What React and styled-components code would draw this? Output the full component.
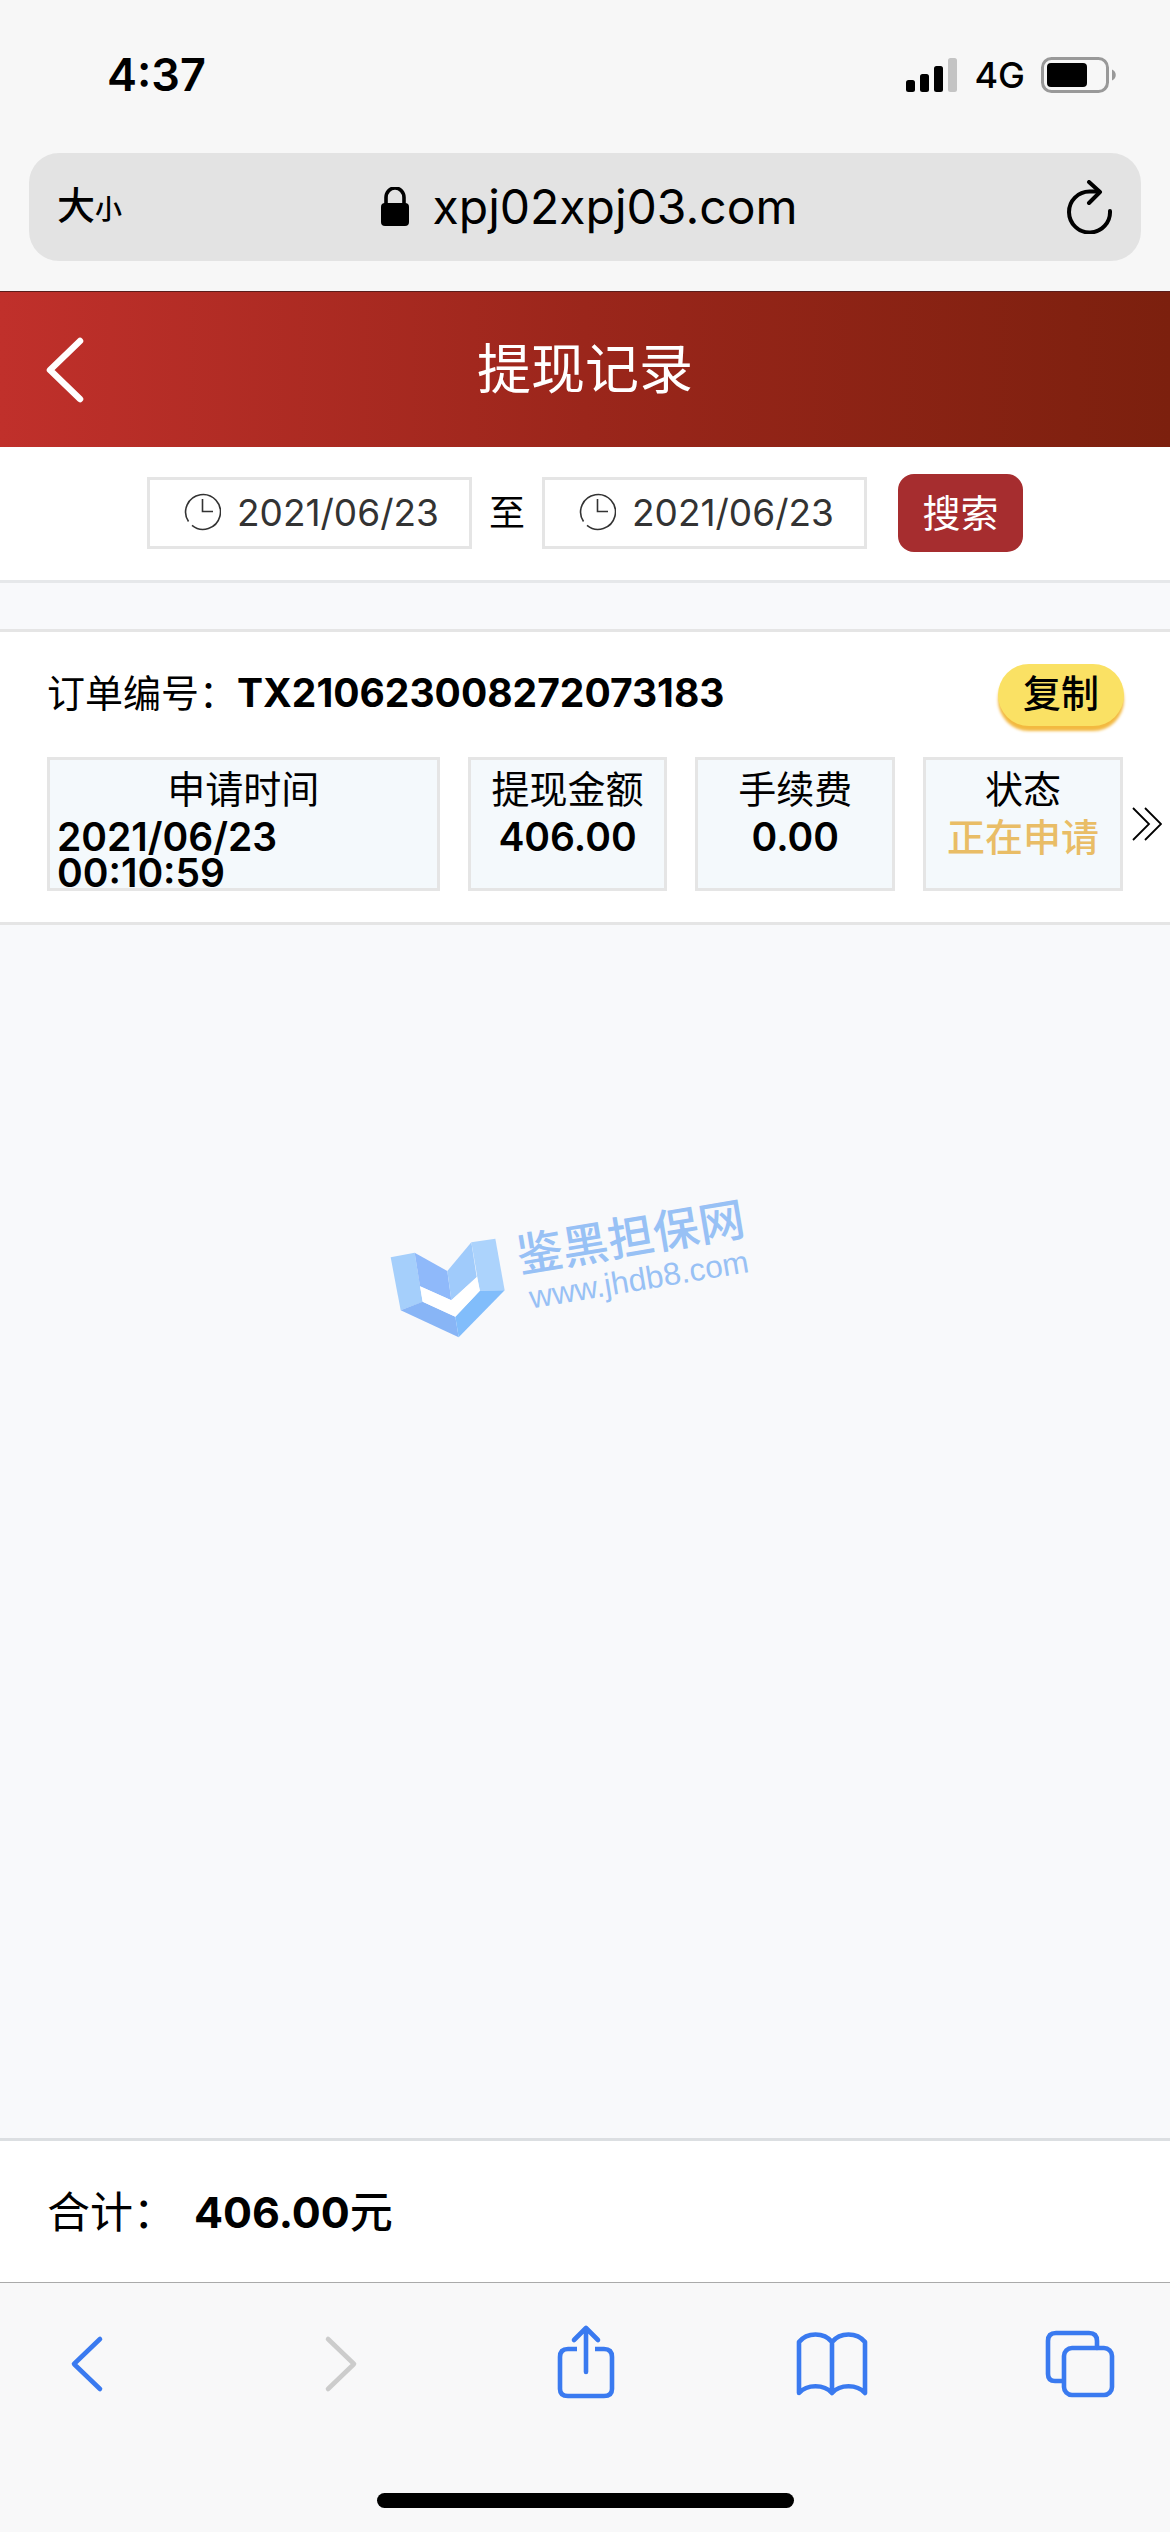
import React, { useState } from "react";
import styled, { createGlobalStyle } from "styled-components";

const GlobalStyle = createGlobalStyle`
  * {
    box-sizing: border-box;
  }

  body {
    margin: 0;
    color: #000;
    background: #f8f9fb;
    font-family: Inter, "Noto Sans CJK SC", sans-serif;
    font-size: 38px;
    line-height: 48px;
  }

  button, input {
    margin: 0;
    padding: 0;
    border: 0;
    background: none;
    color: inherit;
    font: inherit;
  }

  svg {
    display: block;
    flex: none;
  }
`;

const Page = styled.div`
  position: relative;
  display: flex;
  flex-direction: column;
  min-height: 100vh;
`;

const BrowserTop = styled.div`
  height: 292px;
  padding: 0 29px;
  background: #f7f7f7;
  border-bottom: 1px solid #5a1d1b;
`;

const StatusBar = styled.div`
  display: flex;
  align-items: center;
  justify-content: space-between;
  height: 153px;
  padding: 0 24px 4px 78px;
`;

const Clock = styled.time`
  font-size: 45px;
  font-weight: 600;
`;

const StatusIcons = styled.div`
  display: flex;
  align-items: center;
  gap: 16px;
  font-size: 36px;
  font-weight: 500;
`;

const AddressBar = styled.div`
  display: flex;
  align-items: center;
  justify-content: space-between;
  height: 108px;
  padding: 0 28px;
  border-radius: 30px;
  background: #e3e3e3;
`;

const TextSize = styled.button`
  display: flex;
  align-items: baseline;
  width: 80px;
  font-size: 38px;
  font-weight: 500;

  small {
    font-size: 27px;
  }
`;

const Address = styled.div`
  display: flex;
  align-items: center;
  gap: 24px;
  font-size: 48px;
`;

const Reload = styled.button`
  display: flex;
  justify-content: flex-end;
  width: 72px;
`;

const Header = styled.header`
  display: grid;
  grid-template-columns: 120px 1fr 120px;
  align-items: center;
  height: 155px;
  color: #fff;
  background: linear-gradient(to right, #c0302b, #9b261b 50%, #7c200e);

  h1 {
    margin: 0;
    font-size: 54px;
    font-weight: 400;
    line-height: 64px;
    text-align: center;
  }
`;

const BackLink = styled.a`
  padding-left: 45px;
  color: inherit;
`;

const Filter = styled.form`
  display: flex;
  align-items: center;
  justify-content: center;
  height: 136px;
  padding-bottom: 2px;
  background: #fff;
  border-bottom: 3px solid #e6e8ea;
`;

const DateBox = styled.label`
  display: flex;
  align-items: center;
  gap: 16px;
  width: 325px;
  height: 72px;
  padding-left: 34px;
  border: 3px solid #e5e5e5;
  color: #333;
  font-size: 37px;

  input {
    flex: 1;
    min-width: 0;
  }
`;

const Until = styled.span`
  width: 70px;
  font-size: 36px;
  text-align: center;
`;

const SearchButton = styled.button`
  width: 125px;
  height: 78px;
  margin-left: 31px;
  border-radius: 16px;
  color: #fff;
  background: #a62d2f;
`;

const Records = styled.main`
  flex: 1;
  padding-top: 46px;
`;

const Record = styled.article`
  padding: 32px 0 31px 47px;
  background: #fff;
  border: solid #e5e5e5;
  border-width: 3px 0;
`;

const RecordHead = styled.div`
  display: flex;
  align-items: center;
  justify-content: space-between;
  padding-right: 46px;
  margin-bottom: 31px;

  p {
    margin: 0 0 4px;
  }

  b {
    font-size: 39px;
    font-weight: 700;
  }
`;

const CopyButton = styled.button`
  width: 126px;
  height: 62px;
  padding-bottom: 4px;
  border-radius: 31px;
  background: #fae164;
  box-shadow: 0 5px 3px #f3b940;
  font-weight: 500;
`;

const RecordBody = styled.div`
  display: flex;
`;

const Cells = styled.dl`
  display: grid;
  flex: 1;
  grid-template-columns: 393fr 200fr 200fr 200fr;
  gap: 28px;
  margin: 0;
`;

const Cell = styled.div`
  display: flex;
  flex-direction: column;
  align-items: center;
  height: 134px;
  padding: 5px 7px 0;
  border: 3px solid #e5e5e5;
  background: #f4f9fc;

  dt {
    white-space: nowrap;
  }

  dd {
    margin: 6px 0 0;
    color: ${({ $pending }) => ($pending ? "#e9bd66" : "inherit")};
    font-size: ${({ $pending }) => ($pending ? "38px" : "39px")};
    font-weight: ${({ $pending }) => ($pending ? 500 : 600)};
    line-height: 36px;
  }
`;

const MoreButton = styled.button`
  display: flex;
  align-items: center;
  justify-content: center;
  width: 47px;
`;

const Total = styled.footer`
  display: flex;
  align-items: center;
  gap: 18px;
  height: 144px;
  padding-left: 47px;
  background: #fff;
  border-top: 3px solid #dcdfe2;
  font-size: 43px;
`;

const Amount = styled.strong`
  font-weight: 700;

  span {
    font-weight: 500;
  }
`;

const Toolbar = styled.nav`
  display: flex;
  justify-content: space-between;
  padding: 39px 50px 0 47px;
  background: #f8f8f9;
  border-top: 1px solid #aaa;

  button {
    color: #3a7af0;
  }

  button:disabled {
    color: #ccc;
  }
`;

const HomeIndicator = styled.div`
  display: flex;
  justify-content: center;
  padding: 91px 0 24px;
  background: #f8f8f9;

  &::after {
    content: "";
    width: 417px;
    height: 15px;
    border-radius: 8px;
    background: #000;
  }
`;

const Watermark = styled.svg`
  position: absolute;
  top: 50%;
  left: 50%;
  transform: translate(-50%, -50%);
  pointer-events: none;
`;

const ClockIcon = () => (
  <svg width="37" height="42" viewBox="0 0 37 42" fill="none" stroke="#333" strokeWidth="1.6">
    <path d="M4.5 29.5A17.4 17.4 0 1 1 8 33.4" />
    <path d="M18.5 7v12.5H29" />
  </svg>
);

const ToolIcon = ({ children }) => (
  <svg width="80" height="80" viewBox="0 0 80 80" fill="none" stroke="currentColor" strokeWidth="4.6" strokeLinecap="round" strokeLinejoin="round">
    {children}
  </svg>
);

const DateField = ({ label, value, onChange }) => (
  <DateBox>
    <ClockIcon />
    <input type="text" aria-label={label} value={value} onChange={(e) => onChange(e.target.value)} />
  </DateBox>
);

const cells = [
  { label: "申请时间", value: "2021/06/23 00:10:59" },
  { label: "提现金额", value: "406.00" },
  { label: "手续费", value: "0.00" },
  { label: "状态", value: "正在申请", pending: true },
];

const App = () => {
  const [from, setFrom] = useState("2021/06/23");
  const [to, setTo] = useState("2021/06/23");

  return (
    <Page>
      <GlobalStyle />
      <BrowserTop>
        <StatusBar>
          <Clock>4:37</Clock>
          <StatusIcons>
            <svg width="52" height="36" viewBox="0 0 52 36">
              <rect x="0" y="23" width="9" height="12" rx="2.5" />
              <rect x="14" y="17" width="9" height="18" rx="2.5" />
              <rect x="28" y="9" width="9" height="26" rx="2.5" />
              <rect x="42" y="1" width="9" height="34" rx="2.5" fill="#c4c4c4" />
            </svg>
            4G
            <svg width="76" height="36" viewBox="0 0 76 36">
              <rect x="1.5" y="1.5" width="65" height="33" rx="9" fill="none" stroke="#999" strokeWidth="3" />
              <rect x="6" y="6" width="40" height="24" rx="4" />
              <path d="M71 12.5c5 2 5 9 0 11z" fill="#999" />
            </svg>
          </StatusIcons>
        </StatusBar>
        <AddressBar>
          <TextSize aria-label="大小">大<small>小</small></TextSize>
          <Address>
            <svg width="28" height="40" viewBox="0 0 28 40">
              <rect x="0" y="16" width="28" height="23" rx="4" />
              <path d="M5 18v-7.500a9 9.500 0 0 1 18 0V18" fill="none" stroke="#000" strokeWidth="3.600" />
            </svg>
            xpj02xpj03.com
          </Address>
          <Reload aria-label="刷新">
            <svg width="46" height="54" viewBox="0 0 46 54" fill="none" stroke="#000" strokeWidth="4" strokeLinecap="round" strokeLinejoin="round">
              <path d="M43 31A20.500 20.500 0 1 1 22.500 11.500H32" />
              <path d="M22 2l11 10-11 11" />
            </svg>
          </Reload>
        </AddressBar>
      </BrowserTop>

      <Header>
        <BackLink href="#back" aria-label="返回">
          <svg width="40" height="68" viewBox="0 0 40 68" fill="none" stroke="currentColor" strokeWidth="6.500" strokeLinecap="round" strokeLinejoin="round">
            <path d="M35 5L5 34l30 29" />
          </svg>
        </BackLink>
        <h1>提现记录</h1>
      </Header>

      <Filter onSubmit={(e) => e.preventDefault()}>
        <DateField label="开始日期" value={from} onChange={setFrom} />
        <Until>至</Until>
        <DateField label="结束日期" value={to} onChange={setTo} />
        <SearchButton type="submit">搜索</SearchButton>
      </Filter>

      <Records>
        <Record>
          <RecordHead>
            <p>订单编号：<b>TX210623008272073183</b></p>
            <CopyButton type="button">复制</CopyButton>
          </RecordHead>
          <RecordBody>
            <Cells>
              {cells.map(({ label, value, pending }) => (
                <Cell key={label} $pending={pending}>
                  <dt>{label}</dt>
                  <dd>{value}</dd>
                </Cell>
              ))}
            </Cells>
            <MoreButton type="button" aria-label="详情">
              <svg width="30" height="34" viewBox="0 0 30 34" fill="none" stroke="#000" strokeWidth="1.800">
                <path d="M1 1l16 16L1 33M13 1l16 16-16 16" />
              </svg>
            </MoreButton>
          </RecordBody>
        </Record>
      </Records>

      <Total>
        <span>合计：</span>
        <Amount>406.00<span>元</span></Amount>
      </Total>

      <Toolbar>
        <button aria-label="后退">
          <ToolIcon><path d="M53 17L27 42l26 25" /></ToolIcon>
        </button>
        <button aria-label="前进" disabled>
          <ToolIcon><path d="M33 17l26 25-26 25" /></ToolIcon>
        </button>
        <button aria-label="分享">
          <ToolIcon>
            <path d="M33 27h-9q-8 0-8 8v32q0 7 8 7h36q8 0 8-7V35q0-8-8-8h-9" strokeLinecap="butt" />
            <path d="M42 50V6M30 18L42 6l12 12" />
          </ToolIcon>
        </button>
        <button aria-label="书签">
          <ToolIcon>
            <path d="M40 20C32 10 15 10 7 20v51c8-9 25-9 33 0 8-9 25-9 33 0V20C65 10 48 10 40 20zv51" />
          </ToolIcon>
        </button>
        <button aria-label="标签页">
          <ToolIcon>
            <path d="M22 59h-7q-7 0-7-7V19q0-8 8-8h33q8 0 8 8v7" />
            <rect x="24" y="26" width="48" height="47" rx="8" />
          </ToolIcon>
        </button>
      </Toolbar>
      <HomeIndicator />

      <Watermark width="400" height="180" viewBox="45 -12 1200 540">
        <path d="M62 232l72-14 24 148-66 25z" fill="#a5cffb" />
        <path d="M134 218l98 55 12 88-94-42z" fill="#8fb9fa" />
        <path d="M232 273l72-86 16 104-76 70z" fill="#a0cbfb" />
        <path d="M304 187l72-11 28 155-75 1z" fill="#acd3fc" />
        <path d="M92 391l66-26 98 45 10 62z" fill="#88b5f6" />
        <path d="M256 410l73-78 75-1-138 141z" fill="#81bdfb" />
        <path d="M150 319l94 42 77-70 9 41-74 78-98-45z" fill="#fff" />
        <g fill="#98c1f5" transform="rotate(-9.500 460 290)">
          <text x="452" y="276" fontSize="138" fontFamily="Noto Sans CJK SC, sans-serif" fontWeight="500">鉴黑担保网</text>
          <text x="468" y="388" fontSize="95" fontFamily="Liberation Sans, sans-serif">www.jhdb8.com</text>
        </g>
      </Watermark>
    </Page>
  );
};

export default App;
